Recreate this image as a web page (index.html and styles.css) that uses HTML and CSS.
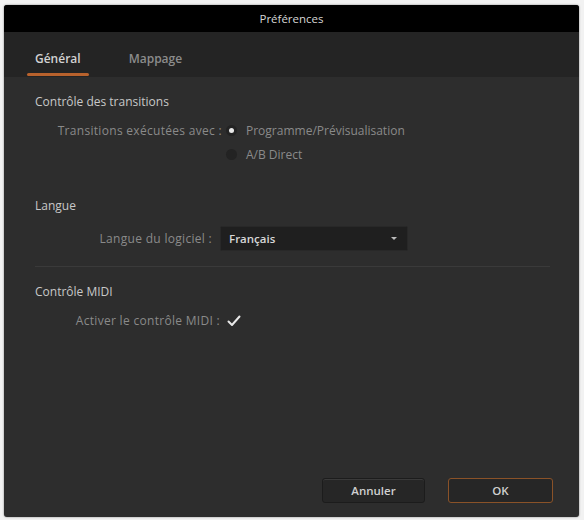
FILE: index.html
```html
<!DOCTYPE html>
<html lang="fr">
<head>
    <meta charset="UTF-8">
    <meta name="viewport" content="width=device-width, initial-scale=1.0">
    <title>Préférences</title>
    <link rel="stylesheet" href="styles.css">
</head>
<body>
    <div class="dialog">
        <div class="titlebar">Préférences</div>
        <div class="tabs">
            <div class="tab active">Général</div>
            <div class="tab">Mappage</div>
        </div>
        <div class="content">
            <div class="section transitions">
                <h2>Contrôle des transitions</h2>
                <div class="row">
                    <span class="label">Transitions exécutées avec :</span>
                    <div class="radios">
                        <div class="radio-item"><span class="radio checked"></span>Programme/Prévisualisation</div>
                        <div class="radio-item"><span class="radio"></span>A/B Direct</div>
                    </div>
                </div>
            </div>
            <div class="section lang">
                <h2>Langue</h2>
                <div class="row">
                    <span class="label">Langue du logiciel :</span>
                    <div class="select">
                        <span>Français</span>
                        <span class="arrow"></span>
                    </div>
                </div>
            </div>
            <div class="section midi">
                <h2>Contrôle MIDI</h2>
                <div class="row">
                    <span class="label">Activer le contrôle MIDI :</span>
                    <svg class="check" viewBox="0 0 14 12" width="14" height="12">
                        <path d="M1.5 6.5 L5 10 L12.5 1.5" fill="none" stroke="#e8e8e8" stroke-width="2" stroke-linecap="round" stroke-linejoin="round"/>
                    </svg>
                </div>
            </div>
        </div>
        <div class="footer">
            <button class="btn">Annuler</button>
            <button class="btn primary">OK</button>
        </div>
    </div>
</body>
</html>
```
FILE: styles.css
```css
body {
    margin: 0;
    padding: 5px 5px 3px 4px;
    background-color: #f2f2f2;
    font-family: 'Open Sans', 'Noto Sans', sans-serif;
    font-size: 12px;
}
.dialog {
    width: 575px;
    height: 512px;
    background-color: #2d2d2d;
    border-radius: 3px;
    overflow: hidden;
    display: flex;
    flex-direction: column;
    box-shadow: 0 0 2px rgba(0, 0, 0, 0.5);
}
.titlebar {
    height: 27px;
    background-color: #000;
    color: #d6d6d6;
    display: flex;
    align-items: center;
    justify-content: center;
    font-size: 11.5px;
}
.tabs {
    height: 45px;
    box-sizing: border-box;
    padding: 19px 0 0 23px;
    background-color: #242424;
    display: flex;
    align-items: flex-start;
    gap: 32px;
}
.tab {
    color: #8c8c8c;
    position: relative;
    padding: 0 8px;
    font-weight: 600;
    line-height: 16px;
}
.tab.active {
    color: #d2d2d2;
}
.tab.active::after {
    content: '';
    position: absolute;
    left: 0;
    right: 0;
    bottom: -9px;
    height: 3px;
    border-radius: 2px;
    background-color: #b8622d;
}
.content {
    flex: 1;
    padding: 0 29px 0 31px;
}
.section h2 {
    margin: 0;
    font-size: 12px;
    font-weight: 400;
    line-height: 16px;
    color: #c8c8c8;
}
.transitions {
    padding-top: 17px;
}
.lang {
    padding-top: 35px;
    padding-bottom: 15px;
    border-bottom: 1px solid #3a3a3a;
}
.midi {
    padding-top: 17px;
}
.row {
    display: flex;
    align-items: flex-start;
    margin-top: 12px;
}
.label {
    color: #8a8a8a;
    line-height: 17px;
    text-align: right;
    flex-shrink: 0;
    letter-spacing: 0.3px;
}
.transitions .label {
    width: 187px;
}
.lang .row {
    align-items: center;
    margin-top: 12px;
}
.lang .label {
    width: 177px;
}
.midi .row {
    align-items: center;
    margin-top: 12px;
}
.midi .label {
    width: 185px;
}
.radios {
    margin-left: 4px;
    display: flex;
    flex-direction: column;
    gap: 7px;
}
.radio-item {
    display: flex;
    align-items: center;
    color: #8a8a8a;
    line-height: 17px;
}
.radio {
    width: 11px;
    height: 11px;
    border-radius: 50%;
    background-color: #232323;
    margin-right: 9px;
    display: flex;
    align-items: center;
    justify-content: center;
}
.radio.checked::after {
    content: '';
    width: 5px;
    height: 5px;
    border-radius: 50%;
    background-color: #e8e8e8;
}
.select {
    margin-left: 8px;
    width: 188px;
    height: 25px;
    box-sizing: border-box;
    background-color: #1f1f1f;
    border: 1px solid #282828;
    border-radius: 2px;
    display: flex;
    align-items: center;
    justify-content: space-between;
    padding: 0 10px 0 8px;
    color: #d6d6d6;
    font-weight: 600;
    font-size: 11.5px;
}
.arrow {
    width: 0;
    height: 0;
    border-left: 3px solid transparent;
    border-right: 3px solid transparent;
    border-top: 3px solid #bbb;
}
.check {
    margin-left: 7px;
}
.footer {
    display: flex;
    justify-content: flex-end;
    gap: 23px;
    padding: 0 26px 14px 0;
}
.btn {
    width: 103px;
    height: 25px;
    background-color: #262626;
    border: 1px solid #1c1c1c;
    border-radius: 3px;
    color: #d0d0d0;
    font-family: inherit;
    font-size: 11.5px;
    font-weight: 600;
    box-shadow: inset 0 1px 0 #3a3a3a;
}
.btn.primary {
    width: 105px;
    border: 1px solid #8a5228;
    box-shadow: none;
}
```
